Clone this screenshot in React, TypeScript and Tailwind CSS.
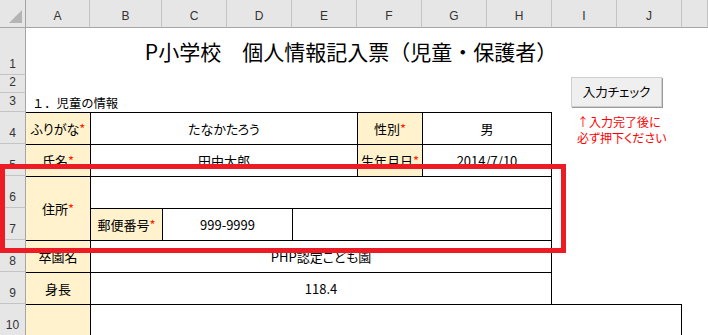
const jp = "font-['Noto_Sans_CJK_JP',sans-serif]";
const palt = "[font-feature-settings:'palt']";

const colLetters = ["A", "B", "C", "D", "E", "F", "G", "H", "I", "J", ""];
const rowHeads = [
  { n: 1, cls: "row-start-2" },
  { n: 2, cls: "row-start-3" },
  { n: 3, cls: "row-start-4" },
  { n: 4, cls: "row-start-5" },
  { n: 5, cls: "row-start-6" },
  { n: 6, cls: "row-start-7" },
  { n: 7, cls: "row-start-8" },
  { n: 8, cls: "row-start-9" },
  { n: 9, cls: "row-start-10" },
  { n: 10, cls: "row-start-11" },
];

function Req() {
  return <span className="text-[#ff1a00]">*</span>;
}

const label = "flex items-center justify-center bg-[#fff2cc] border-t border-black";
const value = "flex items-center justify-center border-t border-l border-black";

export default function App() {
  return (
    <div className="relative h-[335px] w-[708px] overflow-hidden bg-white text-black">
      <div className="grid grid-cols-[26px_64px_72px_65px_65px_65px_65px_65px_65px_65px_65px_26px] grid-rows-[28px_47px_18px_19px_32px_32px_32px_32px_32px_32px_32px]">
        {/* corner */}
        <div className="col-start-1 row-start-1 border-b border-r border-[#a5a5a5] bg-[#e6e6e6]">
          <svg width="25" height="27" viewBox="0 0 25 27">
            <polygon points="22,10 22,23 9,23" fill="#b4b4b4" />
          </svg>
        </div>

        {/* column headers */}
        {colLetters.map((c, i) => (
          <div
            key={i}
            className="row-start-1 flex items-center justify-center border-b border-b-[#a5a5a5] border-r border-r-[#c4c4c4] bg-[#e6e6e6] pt-[5px] font-['Liberation_Sans',sans-serif] text-[12px] text-[#333]"
          >
            {c}
          </div>
        ))}

        {/* row headers */}
        {rowHeads.map((r) => (
          <div
            key={r.n}
            className={`col-start-1 ${r.cls} flex items-end justify-center border-b border-b-[#c4c4c4] border-r border-r-[#a5a5a5] bg-[#e6e6e6] pb-[4px] font-['Liberation_Sans',sans-serif] text-[12px] leading-[12px] text-[#333]`}
          >
            {r.n}
          </div>
        ))}

        {/* title */}
        <div className={`col-start-2 col-span-10 row-start-2 flex items-center justify-center pr-[6px] ${jp} text-[21px] leading-none`}>
          P小学校　個人情報記入票（児童・保護者）
        </div>

        {/* button */}
        <div className="col-start-10 col-span-2 row-start-3 row-span-2 pl-[19px] pt-[2px]">
          <div className={`flex h-[30px] w-[91px] items-center justify-center border border-[#cfcfcf] bg-[#efefef] shadow-[1px_1px_0_#9a9a9a] ${jp} ${palt} text-[12.5px]`}>
            入力チェック
          </div>
        </div>

        {/* section heading */}
        <div className={`col-start-2 col-span-4 row-start-4 flex items-end pb-[1px] pl-[6px] ${jp} text-[12.3px] leading-[16px]`}>
          １．児童の情報
        </div>

        {/* table */}
        <div className={`contents ${jp} ${palt} text-[13px]`}>
          {/* row 4 */}
          <div className={`col-start-2 row-start-5 ${label}`}>
            ふりがな<Req />
          </div>
          <div className={`col-start-3 col-span-4 row-start-5 ${value}`}>たなかたろう</div>
          <div className={`col-start-7 row-start-5 border-l ${label}`}>
            性別<Req />
          </div>
          <div className={`col-start-8 col-span-2 row-start-5 border-r ${value}`}>男</div>

          {/* row 5 */}
          <div className={`col-start-2 row-start-6 ${label}`}>
            氏名<Req />
          </div>
          <div className={`col-start-3 col-span-4 row-start-6 ${value}`}>田中太郎</div>
          <div className={`col-start-7 row-start-6 border-l ${label}`}>
            生年月日<Req />
          </div>
          <div className={`col-start-8 col-span-2 row-start-6 border-r ${value}`}>2014/7/10</div>

          {/* rows 6-7 */}
          <div className={`col-start-2 row-start-7 row-span-2 ${label}`}>
            住所<Req />
          </div>
          <div className={`col-start-3 col-span-7 row-start-7 border-r ${value}`} />
          <div className={`col-start-3 row-start-8 border-l ${label}`}>
            郵便番号<Req />
          </div>
          <div className={`col-start-4 col-span-2 row-start-8 ${value}`}>999-9999</div>
          <div className={`col-start-6 col-span-4 row-start-8 border-r ${value}`} />

          {/* row 8 */}
          <div className={`col-start-2 row-start-9 ${label}`}>卒園名</div>
          <div className={`col-start-3 col-span-7 row-start-9 border-r ${value}`}>PHP認定こども園</div>

          {/* row 9 */}
          <div className={`col-start-2 row-start-10 ${label}`}>身長</div>
          <div className={`col-start-3 col-span-7 row-start-10 border-r ${value}`}>118.4</div>

          {/* row 10 */}
          <div className={`col-start-2 row-start-11 ${label}`} />
          <div className={`col-start-3 col-span-9 row-start-11 border-r ${value}`} />
        </div>

        {/* note */}
        <div className={`col-start-10 col-span-3 row-start-5 row-span-2 pl-[25px] pt-[2px] ${jp} ${palt} text-[12px] leading-[16px] text-[#ff0000]`}>
          <div>↑入力完了後に</div>
          <div>必ず押下ください</div>
        </div>
      </div>

      {/* highlight frame */}
      <div className="absolute left-0 top-[164px] h-[89px] w-[566px] border-[5px] border-[#ed1c24]" />
    </div>
  );
}
